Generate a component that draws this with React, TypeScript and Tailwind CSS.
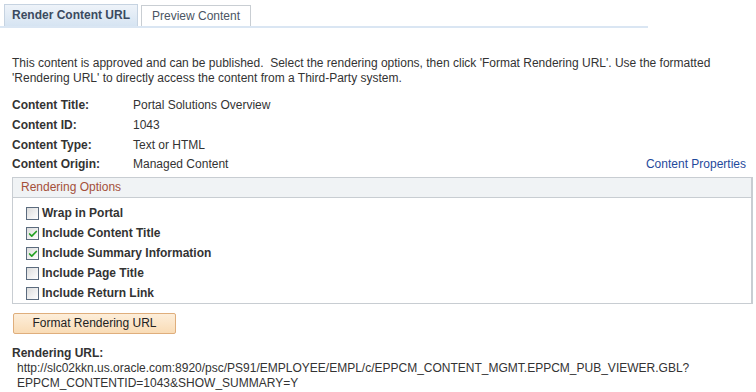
import { Check } from "lucide-react";

const FIELDS: { label: string; value: string }[] = [
  { label: "Content Title:", value: "Portal Solutions Overview" },
  { label: "Content ID:", value: "1043" },
  { label: "Content Type:", value: "Text or HTML" },
  { label: "Content Origin:", value: "Managed Content" },
];

const OPTIONS: { label: string; checked: boolean }[] = [
  { label: "Wrap in Portal", checked: false },
  { label: "Include Content Title", checked: true },
  { label: "Include Summary Information", checked: true },
  { label: "Include Page Title", checked: false },
  { label: "Include Return Link", checked: false },
];

function Box({ checked }: { checked: boolean }) {
  return (
    <span className="flex h-[13px] w-[13px] items-center justify-center border border-[#5b6b7e] bg-gradient-to-br from-[#dcdcdc] to-white">
      {checked && <Check className="h-[10px] w-[10px] text-[#21a121]" strokeWidth={4} />}
    </span>
  );
}

export default function App() {
  return (
    <div className="h-[392px] w-[756px] bg-white font-['Liberation_Sans',Arial,sans-serif] text-[12px] leading-[15px] text-[#333]">
      <div className="flex w-[648px] items-end gap-[3px] border-b-[2px] border-[#dae6f3] pl-[4px] pt-[4px]">
        <div className="flex h-[22px] w-[134px] items-center justify-center border border-b-0 border-[#c6d3e1] bg-gradient-to-b from-[#eef3f9] to-[#d6e4f2] font-bold text-[#3b4a60]">
          Render Content URL
        </div>
        <div className="flex h-[21px] w-[110px] items-center justify-center border border-b-0 border-[#c9ced3] bg-white text-[#4b5563]">
          Preview Content
        </div>
      </div>

      <p className="mt-[28px] w-[744px] px-[12px]">
        This content is approved and can be published.&nbsp; Select the rendering options, then click 'Format Rendering URL'. Use the formatted 'Rendering URL' to directly access the content from a Third-Party system.
      </p>

      <div className="mt-[12px] flex flex-col gap-[5px] pl-[12px] pr-[10px]">
        {FIELDS.map((f, i) => (
          <div key={f.label} className={`flex items-center ${i === 3 ? "-mt-[1px]" : ""}`}>
            <span className="w-[121px] font-bold">{f.label}</span>
            <span className="flex-1">{f.value}</span>
            {i === 3 && <span className="text-[#1f4a9c]">Content Properties</span>}
          </div>
        ))}
      </div>

      <div className="ml-[12px] mt-[5px] w-[741px] border border-[#c8cdd2] border-r-[2px]">
        <div className="flex h-[20px] items-center border-b border-[#c8cdd2] bg-[#f0f3f5] pl-[8px] text-[#a4503a]">
          Rendering Options
        </div>
        <div className="flex flex-col gap-[5px] pb-[2px] pl-[13px] pt-[8px]">
          {OPTIONS.map((o) => (
            <label key={o.label} className="flex items-center gap-[3px] font-bold">
              <Box checked={o.checked} />
              {o.label}
            </label>
          ))}
        </div>
      </div>

      <button className="ml-[13px] mt-[9px] flex h-[21px] w-[163px] items-center justify-center rounded-[2px] border border-[#dfae7c] bg-gradient-to-b from-[#fdeeda] to-[#f9dcb6] text-[#222]">
        Format Rendering URL
      </button>

      <div className="mt-[12px] pl-[12px] font-bold">Rendering URL:</div>
      <div className="pl-[17px]">
        http://slc02kkn.us.oracle.com:8920/psc/PS91/EMPLOYEE/EMPL/c/EPPCM_CONTENT_MGMT.EPPCM_PUB_VIEWER.GBL?
        <br />
        EPPCM_CONTENTID=1043&amp;SHOW_SUMMARY=Y
      </div>
    </div>
  );
}
